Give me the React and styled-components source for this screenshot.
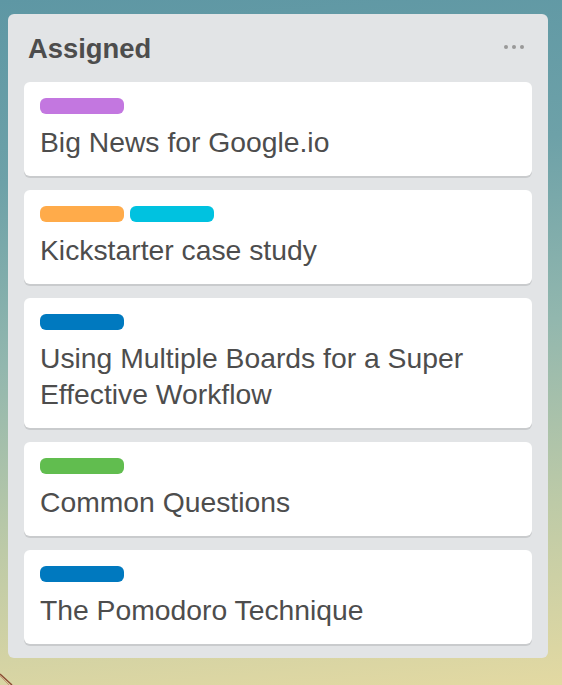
import React from "react";
import styled, { createGlobalStyle } from "styled-components";

// Board colors (old Trello palette)
const colors = {
  list: "#e2e4e6",
  text: "#4d4d4d",
  dots: "#999",
  purple: "#c377e0",
  orange: "#ffab4a",
  sky: "#00c2e0",
  blue: "#0079bf",
  green: "#61bd4f",
};

const GlobalStyle = createGlobalStyle`
  html, body {
    margin: 0;
    padding: 0;
  }
  body {
    font-family: "Liberation Sans", Arial, sans-serif;
  }
`;

const Board = styled.div`
  position: relative;
  width: 562px;
  height: 685px;
  overflow: hidden;
  padding: 14px 14px 0 8px;
  box-sizing: border-box;
  background: linear-gradient(
    175deg,
    #5e97a4 0%,
    #6da1a8 25%,
    #92b7ae 50%,
    #bdcaa7 75%,
    #e3d9a2 100%
  );
`;

const List = styled.div`
  width: 540px;
  box-sizing: border-box;
  background: ${colors.list};
  border-radius: 6px;
  padding: 0 16px 14px;
`;

const ListHeader = styled.div`
  display: flex;
  justify-content: space-between;
  align-items: center;
  padding: 17px 8px 15px 4px;
`;

const ListTitle = styled.h2`
  margin: 0;
  font-size: 27.4px;
  line-height: 36px;
  font-weight: bold;
  color: ${colors.text};
`;

const MenuDots = styled.div`
  display: flex;
  gap: 3.5px;
  margin-top: -4px;

  & > span {
    width: 4.5px;
    height: 4.5px;
    border-radius: 50%;
    background: ${colors.dots};
  }
`;

const Cards = styled.div`
  display: flex;
  flex-direction: column;
  gap: 14px;
`;

const Card = styled.div`
  background: #fff;
  border-radius: 6px;
  padding: 16px;
  box-shadow: 0 2px 0 #c9cbcd;
`;

const Labels = styled.div`
  display: flex;
  gap: 6px;
  margin-bottom: 10px;
`;

const Label = styled.span`
  width: 84px;
  height: 16px;
  border-radius: 6px;
  background: ${(props) => colors[props.color]};
`;

const CardTitle = styled.div`
  font-size: 28.3px;
  line-height: 36px;
  color: ${colors.text};
`;

const Twig = styled.svg`
  position: absolute;
  left: 0;
  bottom: 0;
`;

const cards = [
  { labels: ["purple"], title: "Big News for Google.io" },
  { labels: ["orange", "sky"], title: "Kickstarter case study" },
  {
    labels: ["blue"],
    title: "Using Multiple Boards for a Super Effective Workflow",
  },
  { labels: ["green"], title: "Common Questions" },
  { labels: ["blue"], title: "The Pomodoro Technique" },
];

export default function App() {
  return (
    <>
      <GlobalStyle />
      <Board>
        <Twig width="20" height="14" viewBox="0 0 20 14">
          <path d="M0 3 L12 14" stroke="#8a4a32" strokeWidth="1.4" fill="none" />
          <path d="M0 5 L9 14" stroke="#c79a7a" strokeWidth="1" fill="none" />
        </Twig>
        <List>
          <ListHeader>
            <ListTitle>Assigned</ListTitle>
            <MenuDots>
              <span />
              <span />
              <span />
            </MenuDots>
          </ListHeader>
          <Cards>
            {cards.map((card) => (
              <Card key={card.title}>
                <Labels>
                  {card.labels.map((c) => (
                    <Label key={c} color={c} />
                  ))}
                </Labels>
                <CardTitle>{card.title}</CardTitle>
              </Card>
            ))}
          </Cards>
        </List>
      </Board>
    </>
  );
}
